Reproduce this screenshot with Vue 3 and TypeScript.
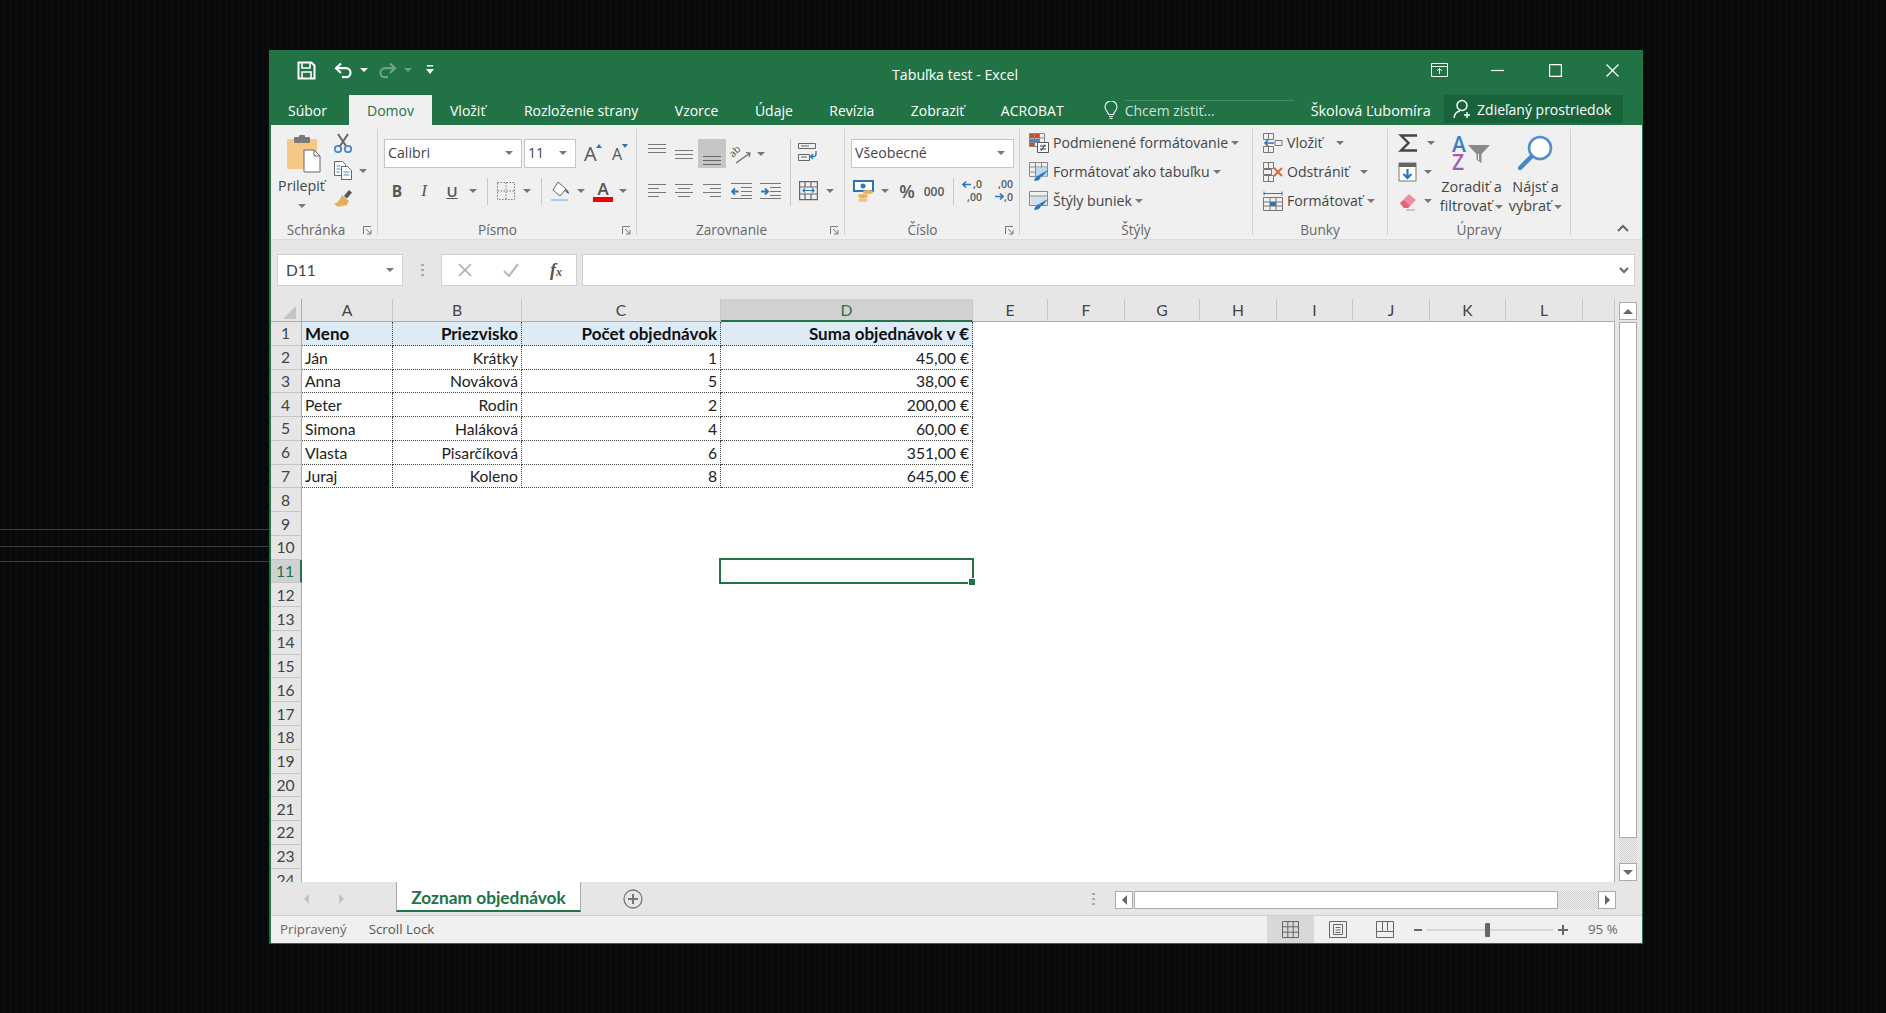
<script setup lang="ts">
const tabs = ['Vložiť', 'Rozloženie strany', 'Vzorce', 'Údaje', 'Revízia', 'Zobraziť', 'ACROBAT']
const columns = ['A', 'B', 'C', 'D', 'E', 'F', 'G', 'H', 'I', 'J', 'K', 'L', '']
const table: string[][] = [
  ['Meno', 'Priezvisko', 'Počet objednávok', 'Suma objednávok v €'],
  ['Ján', 'Krátky', '1', '45,00 €'],
  ['Anna', 'Nováková', '5', '38,00 €'],
  ['Peter', 'Rodin', '2', '200,00 €'],
  ['Simona', 'Haláková', '4', '60,00 €'],
  ['Vlasta', 'Pisarčíková', '6', '351,00 €'],
  ['Juraj', 'Koleno', '8', '645,00 €'],
]
const rowNumbers = Array.from({ length: 24 }, (_, i) => i + 1)

const cellText = (row: number, col: number) => table[row - 1]?.[col] ?? ''
const cellClass = (row: number, col: number) => ({
  data: row <= 7 && col < 4,
  head: row === 1 && col < 4,
  right: col > 0 && col < 4,
  sel: row === 11 && col === 3,
})
</script>

<template>
  <div class="desk">
    <i class="scratch s1"></i><i class="scratch s2"></i><i class="scratch s3"></i>
    <div class="window">
      <header class="titlebar">
        <div class="qat">
          <svg width="19" height="19" viewBox="0 0 19 19" fill="none" stroke="#fff" stroke-width="2"><path d="M1.500 1.500h13l3 3v13h-16z"/><path d="M5 2v5h8V2M5 17v-6h9v6" stroke-width="1.6"/></svg>
          <svg class="undo" width="19" height="17" viewBox="0 0 19 17" fill="none" stroke="#fff" stroke-width="2.2"><path d="M7 1.500 2 6.200l5 4.800M2.500 6.200h9.500a4.400 4.400 0 0 1 0 9H8"/></svg>
          <i class="caret white"></i>
          <svg class="redo" width="19" height="17" viewBox="0 0 19 17" fill="none" stroke="#fff" stroke-width="2.2"><path d="m12 1.500 5 4.700-5 4.800M16.500 6.200H7a4.400 4.400 0 0 0 0 9h3"/></svg>
          <i class="caret white dim"></i>
          <svg class="more" width="8" height="10" viewBox="0 0 8 10" fill="#fff"><path d="M1 0h6v1.500H1zM0 4h8L4 9z"/></svg>
        </div>
        <div class="doc-title">Tabuľka test - Excel</div>
        <div class="win-btns">
          <svg class="wb-display" width="17" height="14" viewBox="0 0 17 14" fill="none" stroke="#fff"><path d="M.5.500h16v13H.5zM.5 3.500h16M8.500 11V5.500M6 8l2.500-2.500L11 8"/></svg>
          <svg class="wb-min" width="13" height="13" viewBox="0 0 13 13" stroke="#fff" stroke-width="1.2"><path d="M0 6.500h13"/></svg>
          <svg class="wb-max" width="13" height="13" viewBox="0 0 13 13" fill="none" stroke="#fff" stroke-width="1.2"><path d="M.6.600h11.800v11.800H.6z"/></svg>
          <svg class="wb-close" width="13" height="13" viewBox="0 0 13 13" stroke="#fff" stroke-width="1.2"><path d="m.5.500 12 12M12.500.500l-12 12"/></svg>
        </div>
      </header>

      <nav class="tabbar">
        <span class="tab file">Súbor</span>
        <span class="tab active">Domov</span>
        <span v-for="t in tabs" :key="t" class="tab">{{ t }}</span>
        <div class="tell">
          <svg width="14" height="19" viewBox="0 0 14 19" fill="none" stroke="#e8f1ea" stroke-width="1.2"><path d="M4.500 13.500C4.200 10.500 1 9.800 1 6a6 6 0 0 1 12 0c0 3.800-3.200 4.500-3.500 7.500zM5 15.500h4M5.500 17.500h3"/></svg>
          <span class="tell-box">Chcem zistiť...</span>
        </div>
        <span class="user">Školová Ľubomíra</span>
        <div class="share">
          <svg width="20" height="20" viewBox="0 0 20 20" fill="none" stroke="#fff" stroke-width="1.4"><circle cx="9" cy="6.500" r="5"/><path d="M1 19c.5-4 3-6.500 6-7M14 13v6M11 16h6"/></svg>
          <span>Zdieľaný prostriedok</span>
        </div>
      </nav>

      <section class="ribbon">
        <!-- Schránka -->
        <div class="group g-clip">
          <div class="clip-body">
            <div class="paste">
              <svg width="36" height="38" viewBox="0 0 36 38"><rect x="1" y="4" width="30" height="30" rx="1" fill="#f5c985"/><rect x="8" y="2" width="16" height="6" rx="1" fill="#7a7a7a"/><rect x="13" y="0" width="6" height="4" rx="1" fill="#7a7a7a"/><path d="M18 15h10l6 6v16H18z" fill="#fff" stroke="#666"/><path d="M28 15v6h6" fill="none" stroke="#666"/></svg>
              <span>Prilepiť</span>
              <i class="caret"></i>
            </div>
            <div class="clip-tools">
              <svg width="20" height="20" viewBox="0 0 20 20" fill="none"><path d="m5 1 8 12M15 1 7 13" stroke="#666" stroke-width="2"/><circle cx="5" cy="16" r="3.200" stroke="#4a86c5" stroke-width="1.800"/><circle cx="15" cy="16" r="3.200" stroke="#4a86c5" stroke-width="1.800"/></svg>
              <div class="row-i">
                <svg width="20" height="19" viewBox="0 0 20 19" fill="#fff" stroke="#666"><path d="M1.500.500h8l3 3v11h-11z"/><path d="M8.500 5.500h6l4 4v9h-10z"/><path d="M3.500 5h4M3.500 8h4M3.500 11h3M10.500 11h6M10.500 14h6" stroke="#4a86c5"/></svg>
                <i class="caret c-copy"></i>
              </div>
              <svg width="20" height="20" viewBox="0 0 20 20"><path d="m11 8 5-6 3 2.500-5 6z" fill="#555"/><path d="m9 7 7 6-3 5-2-1-1 1.500-1.500-1-1 1.500L6 18l-1 1-4-3c3-1 6-4 8-9z" fill="#e2b059"/></svg>
            </div>
          </div>
          <div class="g-foot"><i></i><span class="lbl short">Schránka</span><svg class="launch" width="9" height="9" viewBox="0 0 9 9" fill="none" stroke="#777"><path d="M.5 8V.500H8M3 3l4.500 4.500M8 4v4H4"/></svg></div>
        </div>

        <!-- Písmo -->
        <div class="group g-font">
          <div class="font-top">
            <div class="combo c-font"><span>Calibri</span><i class="caret"></i></div>
            <div class="combo c-size"><span>11</span><i class="caret"></i></div>
            <span class="grow">A<i class="tri up"></i></span>
            <span class="shrink">A<i class="tri down"></i></span>
          </div>
          <div class="font-bot">
            <b class="fb">B</b>
            <em class="fi">I</em>
            <span class="fu">U</span>
            <i class="caret"></i>
            <i class="vsep"></i>
            <svg width="18" height="18" viewBox="0 0 18 18" fill="none" stroke="#777" stroke-dasharray="1.500 1.500"><path d="M.5.500h17v17H.5zM9 .500v17M.5 9h17"/></svg>
            <i class="caret"></i>
            <i class="vsep"></i>
            <svg width="22" height="22" viewBox="0 0 22 22"><path d="m8 2 8 7-6 7-7-6z" fill="#fff" stroke="#666"/><path d="M16 9c2 1 3 3 3 5l-2-1-2-2z" fill="#2e75b6"/><path d="M1 19h17v2H1z" fill="#a9cdee"/></svg>
            <i class="caret"></i>
            <span class="fa">A<i></i></span>
            <i class="caret"></i>
          </div>
          <div class="g-foot"><i></i><span class="lbl">Písmo</span><svg class="launch" width="9" height="9" viewBox="0 0 9 9" fill="none" stroke="#777"><path d="M.5 8V.500H8M3 3l4.500 4.500M8 4v4H4"/></svg></div>
        </div>

        <!-- Zarovnanie -->
        <div class="group g-align">
          <div class="align-grid">
            <svg width="18" height="22" viewBox="0 0 18 22" stroke="#777"><path d="M0 1.500h18M0 5.500h18M0 9.500h18"/></svg>
            <svg width="18" height="22" viewBox="0 0 18 22" stroke="#777"><path d="M0 7.500h18M0 11.500h18M0 15.500h18"/></svg>
            <span class="hl"><svg width="18" height="22" viewBox="0 0 18 22" stroke="#666"><path d="M0 12.500h18M0 16.500h18M0 20.500h18"/></svg></span>
            <svg class="orient" width="22" height="22" viewBox="0 0 22 22" fill="none" stroke="#666" stroke-width="1.200"><text transform="translate(3 15) rotate(-45)" font-size="10" font-family="Open Sans, sans-serif" fill="#555" stroke="none">ab</text><path d="m6 20 14-10M16 9.500l4 .500-1 4"/></svg>
            <i class="caret"></i>
            <i class="blank"></i>
            <i class="vsep tall"></i>
            <svg class="wrap" width="21" height="20" viewBox="0 0 21 20" fill="none" stroke="#666"><path d="M.5 1.500h17v5H.5zM.5 12.500h11v6H.5zM3 4h8M3 15h6"/><path d="M18 9v3a2.500 2.500 0 0 1-2.500 2.500H13M15 12l-2.500 2.500L15 17" stroke="#2e75b6" stroke-width="1.300"/></svg>
            <i class="blank"></i>

            <svg width="18" height="16" viewBox="0 0 18 16" stroke="#777"><path d="M0 1.500h18M0 5.500h11M0 9.500h18M0 13.500h11"/></svg>
            <svg width="18" height="16" viewBox="0 0 18 16" stroke="#777"><path d="M0 1.500h18M3 5.500h12M0 9.500h18M3 13.500h12"/></svg>
            <svg width="18" height="16" viewBox="0 0 18 16" stroke="#777"><path d="M0 1.500h18M7 5.500h11M0 9.500h18M7 13.500h11"/></svg>
            <svg width="21" height="18" viewBox="0 0 21 18" fill="none" stroke="#777"><path d="M0 1.500h21M10 5.500h11M10 9.500h11M10 13.500h11M0 16.500h21"/><path d="M7.500 9.500H1M4 6.500l-3 3 3 3" stroke="#2e75b6" stroke-width="1.800"/></svg>
            <svg class="span2" width="21" height="18" viewBox="0 0 21 18" fill="none" stroke="#777"><path d="M0 1.500h21M10 5.500h11M10 9.500h11M10 13.500h11M0 16.500h21"/><path d="M1 9.500h7M5 6.500l3 3-3 3" stroke="#2e75b6" stroke-width="1.800"/></svg>
            <svg width="19" height="20" viewBox="0 0 19 20" fill="none" stroke="#666" stroke-width="1.200"><path d="M.6.600h17.800v18H.6zM.6 6h17.800M.6 13h17.800M6 .600V6M12 .600V6M6 13v6M12 13v6"/><path d="M4 9.500h11M6 7.500l-2 2 2 2M13 7.500l2 2-2 2" stroke="#2e75b6"/></svg>
            <i class="caret"></i>
          </div>
          <div class="g-foot"><i></i><span class="lbl">Zarovnanie</span><svg class="launch" width="9" height="9" viewBox="0 0 9 9" fill="none" stroke="#777"><path d="M.5 8V.500H8M3 3l4.500 4.500M8 4v4H4"/></svg></div>
        </div>

        <!-- Číslo -->
        <div class="group g-num">
          <div class="combo c-num"><span>Všeobecné</span><i class="caret"></i></div>
          <div class="num-bot">
            <svg width="22" height="22" viewBox="0 0 22 22"><path d="M1 1h19v10H1z" fill="#fff" stroke="#2e75b6" stroke-width="2"/><circle cx="10" cy="6" r="2.500" fill="#2e75b6"/><ellipse cx="15" cy="12" rx="5" ry="2" fill="#e9b35a"/><ellipse cx="10" cy="16" rx="5" ry="2" fill="#e9b35a"/><ellipse cx="10" cy="20" rx="5" ry="2" fill="#f0c987"/></svg>
            <i class="caret"></i>
            <span class="pct">%</span>
            <span class="zeros">000</span>
            <i class="vsep"></i>
            <span class="dec">
              <svg width="9" height="9" viewBox="0 0 9 9" fill="none" stroke="#2e75b6" stroke-width="1.600"><path d="M9 4.500H1M4 1.500l-3 3 3 3"/></svg><span>,0</span>
              <span class="full">,00</span>
            </span>
            <span class="dec">
              <i></i><span>,00</span>
              <span class="full"><svg width="9" height="9" viewBox="0 0 9 9" fill="none" stroke="#2e75b6" stroke-width="1.600"><path d="M0 4.500h8M5 1.500l3 3-3 3"/></svg>,0</span>
            </span>
          </div>
          <div class="g-foot"><i></i><span class="lbl">Číslo</span><svg class="launch" width="9" height="9" viewBox="0 0 9 9" fill="none" stroke="#777"><path d="M.5 8V.500H8M3 3l4.500 4.500M8 4v4H4"/></svg></div>
        </div>

        <!-- Štýly -->
        <div class="group g-styles">
          <div class="stack">
            <div class="line">
              <svg width="20" height="20" viewBox="0 0 20 20" fill="none" stroke="#888"><path d="M.5.500h15v13H.5zM.5 5h15M.5 9.500h15M5.500.500v13M10.500.500v13"/><path d="M1 1h4v4H1z" fill="#d04a2a" stroke="none"/><path d="M6 1h4v4H6z" fill="#d04a2a" stroke="none"/><path d="M1 6h9v3H1z" fill="#4a86c5" stroke="none"/><path d="M1 10h4v3H1z" fill="#d04a2a" stroke="none"/><path d="M8.500 9.500h11v10h-11z" fill="#fff" stroke="#555"/><path d="M11 13h6M11 16h6M16 11.500l-4 6.500" stroke="#333"/></svg>
              <span>Podmienené formátovanie</span><i class="caret"></i>
            </div>
            <div class="line">
              <svg width="20" height="20" viewBox="0 0 20 20" fill="none" stroke="#888"><path d="M.5.500h18v14H.5zM.5 5h18M.5 10h18M6.500.500v14M12.500.500v14"/><path d="M7 5.500h11v9H7z" fill="#bdd7ee" stroke="none"/><path d="m19 8-6 7-3-2z" fill="#2e75b6" stroke="none"/><path d="M10 13c-3 1-4 3-5 6 3 0 6-1 7-4z" fill="#2e75b6" stroke="none"/></svg>
              <span>Formátovať ako tabuľku</span><i class="caret"></i>
            </div>
            <div class="line">
              <svg width="20" height="20" viewBox="0 0 20 20" fill="none" stroke="#888"><path d="M.5.500h18v14H.5zM.5 5h18"/><path d="M2 6h15v8H2z" fill="#d0dfee" stroke="none"/><path d="m19 8-6 7-3-2z" fill="#2e75b6" stroke="none"/><path d="M10 13c-3 1-4 3-5 6 3 0 6-1 7-4z" fill="#2e75b6" stroke="none"/></svg>
              <span>Štýly buniek</span><i class="caret"></i>
            </div>
          </div>
          <div class="g-foot"><i></i><span>Štýly</span><i></i></div>
        </div>

        <!-- Bunky -->
        <div class="group g-cells">
          <div class="stack">
            <div class="line">
              <svg width="20" height="20" viewBox="0 0 20 20" fill="none" stroke="#777"><path d="M.5.500h10v6H.5zM.5 13.500h10v6H.5zM5.500.500v6M5.500 13.500v6M12 7.500h7v5h-7z"/><path d="M11 10H2M5 7l-3 3 3 3" stroke="#2e75b6" stroke-width="1.600"/></svg>
              <span>Vložiť</span><i class="caret m-ins"></i>
            </div>
            <div class="line">
              <svg width="20" height="20" viewBox="0 0 20 20" fill="none" stroke="#777"><path d="M.5.500h10v6H.5zM.5 13.500h10v6H.5zM5.500.500v6M5.500 13.500v6M.5 7.500h8v5h-8z"/><path d="m11 6 8 8M19 6l-8 8" stroke="#d9663a" stroke-width="1.800"/></svg>
              <span>Odstrániť</span><i class="caret m-del"></i>
            </div>
            <div class="line">
              <svg width="20" height="20" viewBox="0 0 20 20" fill="none" stroke="#777"><path d="M1 2.500h18M1 .500v4M19 .500v4" stroke="#2e75b6"/><path d="M.5 6.500h19v13H.5zM.5 11h19M.5 15h19M7 6.500v13M13 6.500v13"/><path d="M7 11h6v4H7z" fill="#2e75b6" stroke="none"/></svg>
              <span>Formátovať</span><i class="caret m-fmt"></i>
            </div>
          </div>
          <div class="g-foot"><i></i><span>Bunky</span><i></i></div>
        </div>

        <!-- Úpravy -->
        <div class="group g-edit">
          <div class="edit-body">
            <div class="stack small">
              <div class="line">
                <svg width="20" height="20" viewBox="0 0 20 20" fill="none" stroke="#444" stroke-width="2.400"><path d="M19 2.500H3l7.500 7.500L3 17.500h16"/></svg>
                <i class="caret m-sum"></i>
              </div>
              <div class="line">
                <svg width="20" height="20" viewBox="0 0 20 20"><path d="M1 1h17v18H1z" fill="#fff" stroke="#777"/><path d="M1 1h17v4H1z" fill="#666"/><path d="M9.500 7v9M5.500 12l4 4 4-4" fill="none" stroke="#2e75b6" stroke-width="2.200"/></svg>
                <i class="caret"></i>
              </div>
              <div class="line">
                <svg width="20" height="20" viewBox="0 0 20 20"><path d="m2 12 9-9 7 6-8 8H6z" fill="#ef8f9b"/><path d="m2 12 4 5h4l2-2-6-6z" fill="#e9606f"/><path d="M8 19h9" stroke="#999"/></svg>
                <i class="caret"></i>
              </div>
            </div>
            <div class="big sort">
              <div class="az">
                <span class="az-l"><span class="a-l">A</span><span class="z-l">Z</span></span>
                <svg width="24" height="24" viewBox="0 0 24 24"><path d="M1 3h22l-8.500 9v9l-5-3v-6z" fill="#8a8a8a"/><path d="M11.500 12v6.500" stroke="#fff"/></svg>
              </div>
              <span>Zoradiť a</span>
              <span>filtrovať<i class="caret inl"></i></span>
            </div>
            <div class="big find">
              <svg width="36" height="36" viewBox="0 0 36 36" fill="none"><circle cx="22" cy="13" r="11" fill="#fff" stroke="#5390cc" stroke-width="2.600"/><path d="m13 22-11 11" stroke="#4a86c5" stroke-width="4.500" stroke-linecap="round"/></svg>
              <span>Nájsť a</span>
              <span>vybrať<i class="caret inl"></i></span>
            </div>
          </div>
          <div class="g-foot"><i></i><span>Úpravy</span><i></i></div>
        </div>

        <div class="collapse">
          <svg width="12" height="8" viewBox="0 0 12 8" fill="none" stroke="#666" stroke-width="2"><path d="m1 7 5-5 5 5"/></svg>
        </div>
      </section>

      <section class="formula">
        <div class="namebox"><span>D11</span><i class="caret"></i></div>
        <span class="fdots"></span>
        <div class="fx">
          <svg width="14" height="14" viewBox="0 0 14 14" stroke="#aaa" stroke-width="1.600"><path d="m1 1 12 12M13 1 1 13"/></svg>
          <svg width="16" height="14" viewBox="0 0 16 14" fill="none" stroke="#bbb" stroke-width="2.200"><path d="m1 8 5 5L15 1"/></svg>
          <span class="fx-label">f<small>x</small></span>
        </div>
        <div class="finput">
          <svg width="10" height="7" viewBox="0 0 10 7" fill="none" stroke="#666" stroke-width="2"><path d="m1 1 4 4 4-4"/></svg>
        </div>
      </section>

      <section class="sheetrow">
        <div class="grid">
          <div class="corner"><i></i></div>
          <div v-for="(c, i) in columns" :key="c + i" class="colhead" :class="{ cur: c === 'D' }">{{ c }}</div>
          <template v-for="r in rowNumbers" :key="r">
            <div class="rowhead" :class="{ cur: r === 11 }">{{ r }}</div>
            <div v-for="(c, i) in columns" :key="i" class="cell" :class="cellClass(r, i)">{{ cellText(r, i) }}</div>
          </template>
        </div>
        <div class="vscroll">
          <span class="sbtn"><i class="tri-up"></i></span>
          <span class="vthumb"></span>
          <span class="vtrack"></span>
          <span class="sbtn"><i class="tri-down"></i></span>
        </div>
      </section>

      <section class="sheettabs">
        <div class="navs"><i class="nl"></i><i class="nr"></i></div>
        <div class="sheettab">Zoznam objednávok</div>
        <svg class="addsheet" width="20" height="20" viewBox="0 0 20 20" fill="none" stroke="#777" stroke-width="1.300"><circle cx="10" cy="10" r="9"/><path d="M5 10h10M10 5v10" stroke-width="2"/></svg>
        <span class="hdots"></span>
        <div class="hscroll">
          <span class="hbtn"><i class="nl dark"></i></span>
          <span class="hthumb"></span>
          <span class="htrack"></span>
          <span class="hbtn"><i class="nr dark"></i></span>
        </div>
      </section>

      <footer class="status">
        <span class="st1">Pripravený</span>
        <span class="st2">Scroll Lock</span>
        <div class="views">
          <span class="vb on"><svg width="17" height="17" viewBox="0 0 17 17" fill="none" stroke="#666"><path d="M.5.500h16v16H.5zM.5 5.800h16M.5 11.200h16M5.800.500v16M11.200.500v16"/></svg></span>
          <span class="vb"><svg width="18" height="17" viewBox="0 0 18 17" fill="none" stroke="#666"><path d="M.5.500h17v16H.5z"/><path d="M4.500 3.500h9v10h-9zM6.500 6.500h5M6.500 9h5M6.500 11.500h5"/></svg></span>
          <span class="vb"><svg width="18" height="17" viewBox="0 0 18 17" fill="none" stroke="#666"><path d="M.5.500h17v16H.5zM.5 10.500h6v-10M6.500 10.500h5v-10M11.500 10.500h6"/></svg></span>
          <svg class="slider" width="156" height="20" viewBox="0 0 156 20"><path d="M0 10h8" stroke="#666" stroke-width="2"/><path d="M13 10h126" stroke="#bbb"/><rect x="71" y="3" width="5" height="14" rx="1" fill="#666"/><path d="M144 10h10M149 5v10" stroke="#666" stroke-width="2"/></svg>
          <span class="zoom">95 %</span>
        </div>
      </footer>
    </div>
  </div>
</template>

<style>
html, body {
  margin: 0;
  background: #08090b;
}
</style>

<style scoped>
.desk {
  position: relative;
  width: 1886px;
  height: 1013px;
  box-sizing: border-box;
  padding: 50px 0 0 270px;
  overflow: hidden;
  background: repeating-linear-gradient(90deg, #08090b 0 3px, #0b0c0e 3px 6px);
  font-family: "Open Sans", "Noto Sans", sans-serif;
}
.scratch {
  position: absolute;
  left: 0;
  width: 269px;
  height: 1px;
  background: #3d3d3f;
}
.s1 { top: 529px; }
.s2 { top: 546px; }
.s3 { top: 561px; }

.window {
  position: relative;
  display: flex;
  flex-direction: column;
  width: 1373px;
  height: 894px;
  background: #f0f0f0;
  outline: 1px solid #217346;
  outline-offset: -1px;
  box-shadow: -1px 0 0 #217346;
}

/* titulok */
.titlebar {
  display: flex;
  align-items: center;
  height: 45px;
  background: #217346;
  color: #fff;
  flex: none;
}
.qat {
  display: flex;
  align-items: center;
  width: 622px;
  height: 100%;
  padding: 0 0 5px 27px;
  box-sizing: border-box;
}
.undo { margin-left: 18px; }
.qat .caret { margin-left: 7px; }
.redo { margin-left: 10px; opacity: .35; }
.qat .caret.dim { opacity: .35; }
.more { margin-left: 14px; }
.doc-title {
  font-size: 14.200px;
  width: 126px;
  margin-top: 4px;
  white-space: nowrap;
}
.win-btns {
  display: flex;
  align-items: center;
  margin-left: auto;
  height: 100%;
  padding: 0 24px 5px 0;
  box-sizing: border-box;
}
.wb-display { margin-right: 43px; }
.wb-min { margin-right: 45px; }
.wb-max { margin-right: 44px; }

/* karty */
.tabbar {
  display: flex;
  align-items: stretch;
  height: 30px;
  background: #217346;
  color: #fff;
  font-size: 14px;
  flex: none;
}
.tab {
  display: flex;
  align-items: center;
  white-space: nowrap;
  margin-left: 36.500px;
}
.tab.file { margin-left: 18px; width: 41px; }
.tab.active {
  margin-left: 20px;
  width: 83px;
  justify-content: center;
  background: #f0f0f0;
  color: #217346;
}
.tab.active + .tab { margin-left: 18px; padding-right: 2px; }
.tell {
  display: flex;
  align-items: center;
  gap: 7px;
  margin-left: 40px;
  width: 190px;
  color: #cfe2d6;
}
.tell-box {
  align-self: flex-end;
  flex: 1;
  height: 25px;
  line-height: 20px;
  box-sizing: border-box;
  border-top: 1px solid rgba(255, 255, 255, .16);
}
.user {
  display: flex;
  align-items: center;
  margin-left: 17px;
  width: 133.400px;
  font-size: 14.400px;
  white-space: nowrap;
}
.share {
  display: flex;
  align-items: center;
  gap: 4px;
  width: 179px;
  height: 28px;
  padding-left: 9px;
  box-sizing: border-box;
  background: #19633a;
  white-space: nowrap;
}

/* ribbon */
.ribbon {
  display: flex;
  height: 115px;
  box-sizing: border-box;
  padding-top: 4px;
  background: #f0f0f0;
  border-bottom: 1px solid #dcdcdc;
  color: #444;
  font-size: 14.100px;
  flex: none;
}
.group {
  display: flex;
  flex-direction: column;
  height: 106px;
  box-sizing: border-box;
  border-right: 1px solid #d2d2d2;
}
.g-foot {
  display: grid;
  grid-template-columns: 1fr auto 1fr;
  align-items: center;
  height: 14px;
  margin-top: auto;
  margin-bottom: -2px;
  padding: 0 5px;
  font-size: 13.600px;
  line-height: 14px;
  color: #666;
}
.lbl { margin-right: 25px; }
.lbl.short { margin-right: 15px; }
.launch { justify-self: end; }
.caret {
  display: inline-block;
  width: 0;
  height: 0;
  border-left: 4px solid transparent;
  border-right: 4px solid transparent;
  border-top: 4px solid #777;
  flex: none;
}
.caret.white { border-top-color: #fff; }
.vsep {
  display: block;
  width: 1px;
  height: 27px;
  background: #c8c8c8;
}
.combo {
  display: flex;
  align-items: center;
  justify-content: space-between;
  box-sizing: border-box;
  height: 29px;
  padding: 0 8px 2px 3px;
  background: #fff;
  border: 1px solid #c6c6c6;
  font-size: 14.200px;
  color: #444;
}

.g-clip { width: 108px; }
.clip-body { display: flex; }
.paste {
  display: flex;
  flex-direction: column;
  align-items: center;
  width: 58px;
  padding: 6px 0 0 6px;
  box-sizing: border-box;
  font-size: 14.200px;
}
.paste svg { margin-left: 4px; }
.paste span { line-height: 20px; margin-top: 3px; margin-left: -1px; }
.paste .caret { margin-top: 8px; }
.clip-tools {
  display: flex;
  flex-direction: column;
  gap: 8px;
  padding: 4px 0 0 5px;
}
.row-i { display: flex; align-items: center; }
.c-copy { margin-left: 6px; }

.g-font { width: 259px; padding: 10px 0 0 6px; }
.font-top { display: flex; align-items: center; }
.c-font { width: 138px; }
.c-size { width: 52px; margin-left: 2px; }
.grow, .shrink {
  position: relative;
  font-family: "Open Sans", sans-serif;
  color: #555;
  line-height: 1;
}
.grow { margin-left: 8px; width: 28px; font-size: 20px; }
.shrink { font-size: 16px; }
.tri {
  position: absolute;
  top: 0;
  left: 12px;
  width: 0;
  height: 0;
  border-left: 3px solid transparent;
  border-right: 3px solid transparent;
}
.tri.up { border-bottom: 4px solid #2e75b6; }
.tri.down { border-top: 4px solid #2e75b6; left: 10px; top: -2px; }
.font-bot {
  display: grid;
  grid-template-columns: 26px 28px 28px 14px 14px 24px 17px 13px 26px 14px 30px 10px;
  height: 30px;
  margin-top: 8px;
  align-items: center;
  justify-items: center;
}
.fb { font-size: 15.500px; color: #555; }
.fi { font-family: "Liberation Serif", serif; font-size: 17px; color: #555; }
.fu { font-size: 15px; color: #555; font-weight: 600; text-decoration: underline; }
.fa {
  display: flex;
  flex-direction: column;
  align-items: center;
  font-size: 17px;
  font-weight: 600;
  color: #555;
  line-height: 17px;
}
.fa i {
  display: block;
  width: 20px;
  height: 5px;
  background: #f00000;
}

.g-align { width: 208px; padding: 10px 0 0 7px; }
.align-grid {
  display: grid;
  grid-template-columns: 26px 28px 28px 30px 10px 18px 12px 24px 20px;
  grid-template-rows: 29px 30px;
  row-gap: 8px;
  align-items: center;
  justify-items: center;
}
.hl {
  display: flex;
  justify-content: center;
  width: 28px;
  height: 29px;
  background: #c6c6c6;
  align-items: flex-end;
  padding-bottom: 2px;
  box-sizing: border-box;
}
.orient { overflow: visible; }
.wrap { margin-top: -3px; }
.vsep.tall { grid-column: 7; grid-row: 1 / 3; height: 67px; }
.span2 { grid-column: span 2; }
.blank { display: block; }

.g-num { width: 175px; padding: 10px 0 0 6px; }
.c-num { width: 163px; }
.num-bot {
  display: grid;
  grid-template-columns: 26px 16px 28px 26px 12px 26px 30px;
  height: 30px;
  margin-top: 8px;
  align-items: center;
  justify-items: center;
  color: #555;
}
.pct { font-size: 18px; font-weight: 600; }
.zeros { font-size: 12px; font-weight: 600; }
.dec {
  display: grid;
  grid-template-columns: 11px auto;
  font-size: 10.500px;
  font-weight: 600;
  line-height: 13px;
  align-items: center;
}
.dec .full { grid-column: 1 / 3; white-space: nowrap; text-align: right; }

.stack {
  display: grid;
  grid-template-rows: repeat(3, 29px);
  align-items: center;
  margin-top: -1px;
}
.line { display: flex; align-items: center; white-space: nowrap; }
.line svg { margin-right: 4px; flex: none; }
.line .caret { margin-left: 3px; }
.g-styles { width: 233px; padding-left: 9px; }
.g-styles .g-foot { margin-left: -9px; }
.g-cells { width: 135px; padding-left: 10px; }
.g-cells .g-foot { margin-left: -10px; }
.line .m-ins { margin-left: 13px; }
.line .m-del { margin-left: 11px; }
.line .m-fmt { margin-left: 4px; }
.g-edit { width: 183px; padding-left: 10px; }
.g-edit .g-foot { margin-left: -10px; }
.edit-body { display: flex; }
.stack.small { width: 39px; }
.stack.small .line svg { margin-right: 5px; }
.stack.small .line .caret { margin-left: 1px; }
.stack.small .line .m-sum { margin-left: 4px; }
.big {
  display: flex;
  flex-direction: column;
  align-items: center;
  font-size: 14.500px;
  line-height: 19px;
  padding-top: 6px;
  white-space: nowrap;
}
.big > svg, .az { margin-bottom: 6px; }
.az {
  display: flex;
  align-items: flex-start;
  height: 36px;
}
.az-l {
  display: flex;
  flex-direction: column;
  font-size: 21px;
  font-weight: 600;
  line-height: 18px;
}
.a-l { color: #3b7fc4; }
.z-l { color: #9c5fb5; }
.az svg { margin: 7px 0 0 1px; }
.sort { width: 69px; }
.find { width: 59px; }
.caret.inl { margin-left: 3px; vertical-align: middle; }
.collapse {
  flex: 1;
  display: flex;
  justify-content: flex-end;
  align-items: flex-end;
  padding: 0 14px 7px 0;
}

/* riadok vzorcov */
.formula {
  display: flex;
  align-items: flex-start;
  height: 59px;
  padding: 14px 8px 0 7px;
  box-sizing: border-box;
  background: #e6e6e6;
  flex: none;
}
.namebox, .fx, .finput {
  display: flex;
  align-items: center;
  height: 32px;
  box-sizing: border-box;
  background: #fff;
  border: 1px solid #d0d0d0;
}
.namebox {
  width: 126px;
  justify-content: space-between;
  padding: 0 8px;
  font-family: Lato, sans-serif;
  font-size: 15.500px;
  color: #444;
}
.fdots {
  width: 3px;
  height: 12px;
  margin: 10px 17px 0 18px;
  background: repeating-linear-gradient(#aaa 0 2px, transparent 2px 5px);
}
.fx {
  width: 136px;
  padding-left: 16px;
  gap: 31px;
}
.fx-label {
  font-family: "Liberation Serif", serif;
  font-style: italic;
  font-weight: 700;
  font-size: 18px;
  color: #555;
}
.fx-label small { font-size: 12px; }
.finput {
  flex: 1;
  margin-left: 5px;
  justify-content: flex-end;
  padding-right: 5px;
}

/* hárok */
.sheetrow {
  display: flex;
  height: 583px;
  flex: none;
  background: #e6e6e6;
}
.grid {
  display: grid;
  grid-template-columns: 32px 91px 129px 199px 252px 75px 77px 75px 77px 76px 77px 76px 77px 32px;
  grid-template-rows: 23px repeat(24, 23.770px);
  width: 1345px;
  height: 583px;
  overflow: hidden;
  border-bottom: 1px solid #ababab;
  background: #fff;
  font-family: Lato, sans-serif;
  font-size: 15.700px;
  color: #222;
  margin-bottom: -1px;
  box-shadow: inset -1px 0 0 #ababab;
}
.corner, .colhead {
  display: flex;
  align-items: center;
  justify-content: center;
  background: #e6e6e6;
  border-bottom: 1px solid #ababab;
  border-right: 1px solid #c6c6c6;
  color: #444;
}
.corner { border-right-color: #ababab; }
.corner i {
  width: 0;
  height: 0;
  margin: 4px 0 0 8px;
  border-left: 13px solid transparent;
  border-bottom: 13px solid #c4c4c4;
}
.colhead:last-of-type { border-right: 0; }
.colhead.cur {
  background: repeating-conic-gradient(#cacaca 0 25%, #d8d8d8 0 50%) 0 0 / 2px 2px;
  border-bottom: 2px solid #217346;
  color: #217346;
}
.rowhead {
  display: flex;
  align-items: center;
  justify-content: center;
  background: #e6e6e6;
  border-bottom: 1px solid #c6c6c6;
  border-right: 1px solid #ababab;
  color: #444;
}
.rowhead.cur {
  background: repeating-conic-gradient(#cacaca 0 25%, #d8d8d8 0 50%) 0 0 / 2px 2px;
  border-right: 2px solid #217346;
  color: #217346;
}
.cell {
  position: relative;
  display: flex;
  align-items: center;
  min-width: 0;
  padding: 1px 3px 0 3px;
  white-space: nowrap;
}
.cell.data {
  border-right: 1px dotted #444;
  border-bottom: 1px dotted #444;
}
.cell.head {
  background: #ddebf7;
  font-size: 17px;
  font-weight: 700;
  color: #111;
}
.cell.right { justify-content: flex-end; }
.cell.sel::before {
  content: "";
  position: absolute;
  inset: -2px -1px -1px -2px;
  border: 2px solid #217346;
}
.cell.sel::after {
  content: "";
  position: absolute;
  right: -3px;
  bottom: -3px;
  width: 6px;
  height: 6px;
  background: #217346;
  border: 1px solid #fff;
}
.vscroll {
  display: flex;
  flex-direction: column;
  width: 18px;
  margin: 3px 0 0 4px;
  height: 579px;
}
.sbtn {
  display: flex;
  align-items: center;
  justify-content: center;
  height: 18px;
  box-sizing: border-box;
  background: #fff;
  border: 1px solid #ababab;
  flex: none;
}
.tri-up, .tri-down {
  width: 0;
  height: 0;
  border-left: 5px solid transparent;
  border-right: 5px solid transparent;
}
.tri-up { border-bottom: 5px solid #666; }
.tri-down { border-top: 5px solid #666; }
.vthumb {
  height: 516px;
  margin-top: 2px;
  box-sizing: border-box;
  background: #fff;
  border: 1px solid #ababab;
  flex: none;
}
.vtrack {
  flex: 1;
  background: repeating-conic-gradient(#d2d2d2 0 25%, #ececec 0 50%) 0 0 / 2px 2px;
}

/* záložky */
.sheettabs {
  display: flex;
  height: 34px;
  background: #e6e6e6;
  border-bottom: 1px solid #cfcfcf;
  box-sizing: border-box;
  flex: none;
}
.navs {
  display: flex;
  align-items: center;
  gap: 30px;
  width: 126px;
  padding-left: 34px;
  box-sizing: border-box;
}
.nl, .nr {
  width: 0;
  height: 0;
  border-top: 5px solid transparent;
  border-bottom: 5px solid transparent;
}
.nl { border-right: 5px solid #c2c2c2; }
.nr { border-left: 5px solid #c2c2c2; }
.nl.dark { border-right-color: #666; }
.nr.dark { border-left-color: #666; }
.sheettab {
  width: 185px;
  height: 30px;
  box-sizing: border-box;
  background: #fff;
  border: 1px solid #ababab;
  border-top: 0;
  border-bottom: 2px solid #217346;
  color: #217346;
  font-family: Lato, sans-serif;
  font-weight: 700;
  font-size: 17.300px;
  line-height: 31px;
  text-align: center;
}
.addsheet { margin: 7px 0 0 42px; }
.hdots {
  width: 3px;
  height: 12px;
  margin: 11px 0 0 449px;
  background: repeating-linear-gradient(#aaa 0 2px, transparent 2px 5px);
}
.hscroll {
  display: flex;
  width: 501px;
  height: 18px;
  margin: 9px 0 0 20px;
}
.hbtn {
  display: flex;
  align-items: center;
  justify-content: center;
  width: 18px;
  box-sizing: border-box;
  background: #fff;
  border: 1px solid #ababab;
  flex: none;
}
.hthumb {
  width: 424px;
  margin-left: 1px;
  box-sizing: border-box;
  background: #fff;
  border: 1px solid #ababab;
}
.htrack {
  flex: 1;
  background: repeating-conic-gradient(#d2d2d2 0 25%, #ececec 0 50%) 0 0 / 2px 2px;
}

/* stavový riadok */
.status {
  display: flex;
  align-items: center;
  flex: 1;
  font-size: 13.300px;
  color: #666;
  background: #f0f0f0;
  padding: 0 15px 0 10px;
  margin-bottom: 1px;
}
.st1, .st2 { margin-top: -2px; }
.st2 { margin-left: 22px; color: #555; }
.views {
  display: flex;
  align-items: center;
  height: 100%;
  margin-left: auto;
}
.vb {
  display: flex;
  align-items: center;
  justify-content: center;
  width: 47px;
  height: 100%;
}
.vb.on { background: repeating-conic-gradient(#d2d2d2 0 25%, #dedede 0 50%) 0 0 / 2px 2px; }
.slider { margin: 0 0 0 6px; }
.zoom { width: 58px; padding: 0 0 2px 18px; box-sizing: border-box; white-space: nowrap; }
</style>
